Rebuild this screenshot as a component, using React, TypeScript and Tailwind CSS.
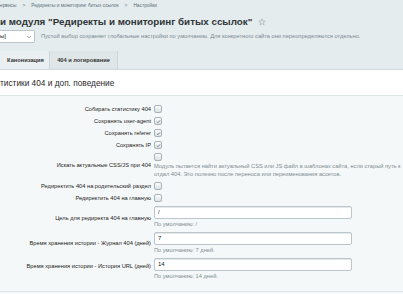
import { ChevronDown } from "lucide-react";

function Check({ checked }: { checked?: boolean }) {
  return (
    <span className="inline-flex h-[8px] w-[8px] shrink-0 items-center justify-center rounded-[2px] border border-[#a8b2b7] bg-gradient-to-b from-[#fafbfc] to-[#dce2e5]">
      {checked && (
        <svg viewBox="0 0 8 8" className="h-[5px] w-[5px]">
          <path d="M1.3 4.4 L3.1 6 L6.7 2" fill="none" stroke="#4a565d" strokeWidth="1" />
        </svg>
      )}
    </span>
  );
}

function CheckRow({ label, checked }: { label: string; checked?: boolean }) {
  return (
    <div className="grid h-[12px] grid-cols-[151px_1fr] items-center gap-x-[3px]">
      <div className="whitespace-nowrap text-right">{label}</div>
      <div className="flex items-center">
        <Check checked={checked} />
      </div>
    </div>
  );
}

function InputRow({ label, value, hint, labelTop }: { label: string; value: string; hint: string; labelTop: string }) {
  return (
    <div className="grid h-[26px] grid-cols-[151px_1fr] gap-x-[3px]">
      <div className={`whitespace-nowrap text-right leading-[8px] ${labelTop}`}>{label}</div>
      <div className="pt-[2px]">
        <div className="flex h-[13px] w-[198px] items-center rounded-[2px] border border-[#bcc5c9] bg-white pl-[3px] text-[6px] text-[#222] shadow-[inset_0_1px_0_#e3e8ea]">
          {value}
        </div>
        <div className="mt-[1px] leading-[8px] text-[#7f8c92]">{hint}</div>
      </div>
    </div>
  );
}

export default function App() {
  return (
    <div className="h-[294px] w-[403px] overflow-hidden bg-[#e5ecee] font-['Liberation_Sans',Arial,sans-serif] text-[#333]">
      {/* breadcrumbs */}
      <div className="flex h-[12px] items-center gap-[6px] whitespace-nowrap text-[4.8px] text-[#5d6f7b]">
        <span>ервисы</span>
        <span>&gt;</span>
        <span>Редиректы и мониторинг битых ссылок</span>
        <span>&gt;</span>
        <span>Настройки</span>
      </div>

      {/* title */}
      <div className="mt-[4px] flex h-[12px] items-center gap-[6px] whitespace-nowrap">
        <h1 className="text-[9.8px] font-bold leading-[12px] text-[#2f3538]">
          и модуля "Редиректы и мониторинг битых ссылок"
        </h1>
        <svg viewBox="0 0 24 24" className="h-[8px] w-[8px]">
          <polygon
            points="12,2.5 14.8,9 21.5,9.3 16.3,13.7 18,20.5 12,16.8 6,20.5 7.7,13.7 2.5,9.3 9.2,9"
            fill="none"
            stroke="#9eabb1"
            strokeWidth="2"
            strokeLinejoin="round"
          />
        </svg>
      </div>

      {/* site select */}
      <div className="mt-[2px] flex h-[13px] items-center gap-[6px] whitespace-nowrap">
        <div className="flex h-[13px] w-[35px] items-center justify-between rounded-r-[2px] border border-l-0 border-[#bcc5c9] bg-white pr-[2px] text-[6px] text-[#222]">
          <span>ы]</span>
          <ChevronDown size={6} strokeWidth={2.5} className="text-[#555]" />
        </div>
        <span className="text-[5.7px] text-[#7b8a91]">
          Пустой выбор сохраняет глобальные настройки по умолчанию. Для конкретного сайта они переопределяются отдельно.
        </span>
      </div>

      {/* tabs */}
      <div className="mt-[8px] flex h-[19px] items-stretch border-b border-[#cfd8db] text-[5.7px] font-bold text-[#333]">
        <div className="flex w-[50px] items-center justify-center border-r border-[#cdd6d9] bg-[#eaf0f1] pl-[2px]">
          Канонизация
        </div>
        <div className="flex w-[68px] items-center justify-center border-r border-[#cdd6d9] bg-[#dfe6e7]">
          404 и логирование
        </div>
      </div>

      {/* content */}
      <div className="bg-white">
        <div className="flex h-[25px] items-center whitespace-nowrap pt-[2px] text-[8.3px] text-[#2b2b2b]">
          тистики 404 и доп. поведение
        </div>
        <div className="border-t border-[#dfe6e8] bg-[#f5f8f8] pb-[9px] pt-[7px] text-[5.7px] text-[#222]">
          <CheckRow label="Собирать статистику 404" />
          <CheckRow label="Сохранять user-agent" checked />
          <CheckRow label="Сохранять referer" checked />
          <CheckRow label="Сохранять IP" checked />

          <div className="grid h-[29px] grid-cols-[151px_1fr] items-center gap-x-[3px]">
            <div className="whitespace-nowrap text-right">Искать актуальные CSS/JS при 404</div>
            <div className="flex flex-col self-stretch pt-[2px]">
              <Check />
              <div className="mt-[1px] whitespace-nowrap leading-[8px] text-[#7f8c92]">
                Модуль пытается найти актуальный CSS или JS файл в шаблонах сайта, если старый путь к
                <br />
                отдал 404. Это полезно после переноса или переименования ассетов.
              </div>
            </div>
          </div>

          <CheckRow label="Редиректить 404 на родительский раздел" />
          <CheckRow label="Редиректить 404 на главную" />

          <InputRow label="Цель для редиректа 404 на главную" value="/" hint="По умолчанию: /" labelTop="pt-[10px]" />
          <InputRow
            label="Время хранения истории - Журнал 404 (дней)"
            value="7"
            hint="По умолчанию: 7 дней."
            labelTop="pt-[9px]"
          />
          <InputRow
            label="Время хранения истории - История URL (дней)"
            value="14"
            hint="По умолчанию: 14 дней."
            labelTop="pt-[6px]"
          />
        </div>
        <div className="h-[20px] border-t border-[#dce3e5] bg-[#f5f8f8]" />
      </div>
    </div>
  );
}
